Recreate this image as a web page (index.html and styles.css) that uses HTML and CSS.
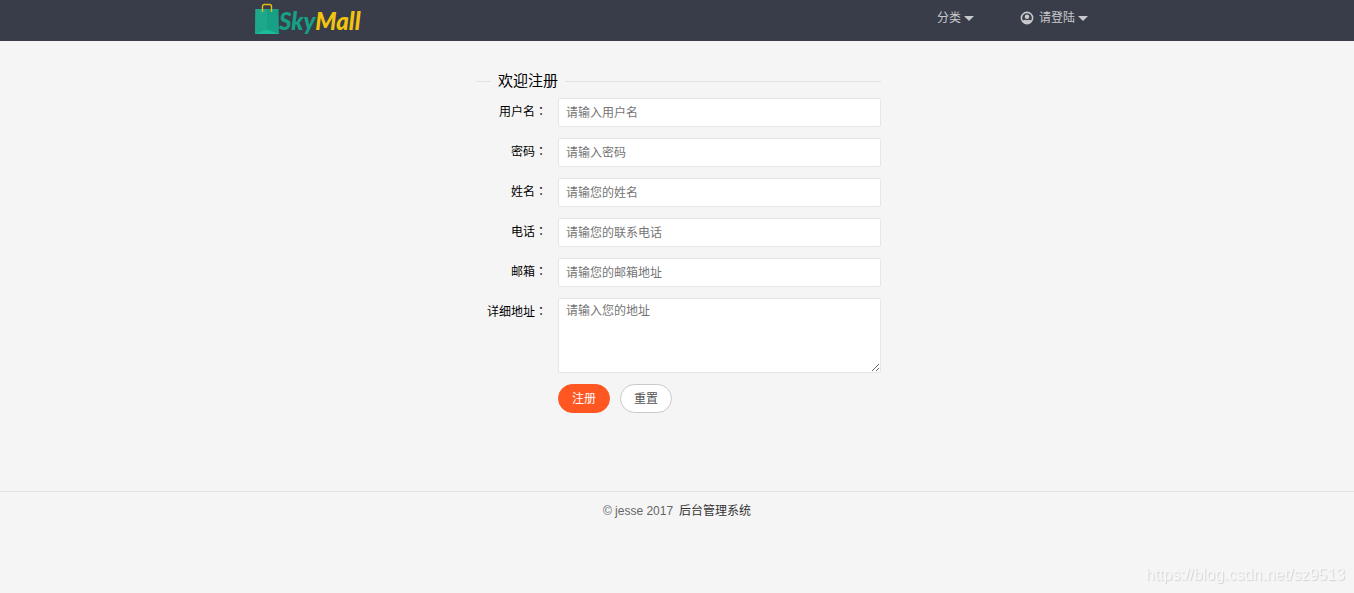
FILE: index.html
```html
<!DOCTYPE html>
<html lang="zh-CN">
<head>
<meta charset="utf-8">
<meta name="viewport" content="width=device-width, initial-scale=1">
<title>欢迎注册</title>
<link rel="stylesheet" href="styles.css">
</head>
<body>
<header class="header">
  <div class="header-inner">
    <a class="logo" href="#">
      <svg class="logo-bag" viewBox="0 0 24 32" aria-hidden="true">
        <path d="M0.500 6h23L24 31H0z" fill="#16a085"/>
        <path d="M0.500 6H12v21L0 31z" fill="#1da88b"/>
        <path d="M0 31l12-4.500L24 31z" fill="#1abc9c"/>
        <path d="M7.500 9V3.500Q7.500 1.500 9.500 1.500h5q2 0 2 2V9" fill="none" stroke="#e8bd12" stroke-width="1.400"/>
      </svg>
      <span class="logo-text"><span class="logo-sky">Sky</span><span class="logo-mall">Mall</span></span>
    </a>
    <nav class="nav">
      <a class="nav-link" href="#">分类<span class="caret"></span></a>
      <a class="nav-link" href="#">
        <svg class="user-icon" viewBox="0 0 14 14" aria-hidden="true">
          <circle cx="7" cy="7" r="5.600" fill="none" stroke="#c8c9cc" stroke-width="1.600"/>
          <circle cx="7" cy="5.700" r="2.300" fill="#c8c9cc"/>
          <path d="M2.300 9.800Q4 8.900 5.500 8.800Q7 9.600 8.500 8.800Q10 8.900 11.700 9.800Q9.600 12.800 7 12.800T2.300 9.800z" fill="#c8c9cc"/>
        </svg>请登陆<span class="caret"></span></a>
    </nav>
  </div>
</header>

<main class="main">
  <form class="form">
    <h1 class="title">欢迎注册</h1>
    <div class="row">
      <label class="label" for="username">用户名<span class="colon" lang="zh-TW">：</span></label>
      <input class="field" id="username" type="text" placeholder="请输入用户名">
    </div>
    <div class="row">
      <label class="label" for="password">密码<span class="colon" lang="zh-TW">：</span></label>
      <input class="field" id="password" type="password" placeholder="请输入密码">
    </div>
    <div class="row">
      <label class="label" for="name">姓名<span class="colon" lang="zh-TW">：</span></label>
      <input class="field" id="name" type="text" placeholder="请输您的姓名">
    </div>
    <div class="row">
      <label class="label" for="phone">电话<span class="colon" lang="zh-TW">：</span></label>
      <input class="field" id="phone" type="tel" placeholder="请输您的联系电话">
    </div>
    <div class="row">
      <label class="label" for="email">邮箱<span class="colon" lang="zh-TW">：</span></label>
      <input class="field" id="email" type="email" placeholder="请输您的邮箱地址">
    </div>
    <div class="row">
      <label class="label" for="address">详细地址<span class="colon" lang="zh-TW">：</span></label>
      <textarea class="field field-area" id="address" placeholder="请输入您的地址"></textarea>
    </div>
    <div class="actions">
      <button class="btn btn-primary" type="submit">注册</button>
      <button class="btn" type="reset">重置</button>
    </div>
  </form>
</main>

<footer class="footer">
  <span>© jesse 2017</span>
  <a class="footer-link" href="#">后台管理系统</a>
</footer>
<div class="watermark">https://blog.csdn.net/sz9513</div>
</body>
</html>
```

FILE: styles.css
```css
* {
  box-sizing: border-box;
}

body {
  margin: 0;
  background: #f5f5f5;
  color: #000;
  font: 12px/20px "Liberation Sans", "Noto Sans CJK SC", sans-serif;
}

a {
  color: inherit;
  text-decoration: none;
}

.header {
  background: #393d49;
}

.header-inner {
  display: flex;
  justify-content: space-between;
  max-width: 844px;
  min-height: 41px;
  margin: 0 auto;
  padding-right: 11px;
}

.logo {
  display: flex;
  align-items: flex-start;
  padding-top: 3px;
}

.logo-bag {
  width: 24px;
  height: 32px;
}

.logo-text {
  padding-top: 4px;
  font: italic 900 24px/28px Lato, sans-serif;
}

.logo-sky {
  color: #16a085;
}

.logo-mall {
  color: #f1c40f;
}

.nav {
  display: flex;
  gap: 46px;
  padding-top: 8px;
  color: #c8c9cc;
}

.nav-link {
  display: flex;
  align-items: center;
  height: 20px;
}

.user-icon {
  width: 14px;
  height: 14px;
  margin-right: 5px;
}

.caret {
  margin-left: 3px;
  border: 5px solid transparent;
  border-top-color: #c8c9cc;
  border-bottom: 0;
}

.form {
  max-width: 408px;
  margin: 0 auto;
  padding: 30px 0 78px 3px;
}

.title {
  display: flex;
  align-items: center;
  gap: 7px;
  margin: 0 0 7px;
  font-size: 15px;
  font-weight: 400;
}

.title::before,
.title::after {
  content: "";
  width: 15px;
  border-top: 1px solid #e2e2e2;
}

.title::after {
  flex: 1;
}

.row {
  display: flex;
  margin-bottom: 11px;
}

.label {
  width: 71px;
  margin-right: 11px;
  padding-top: 3px;
  text-align: right;
}

.colon {
  font-family: "Noto Sans CJK TC", sans-serif;
}

.field {
  flex: 1;
  min-width: 0;
  height: 29px;
  padding: 0 7px;
  border: 1px solid #e6e6e6;
  border-radius: 2px;
  background: #fff;
  font: inherit;
}

.field::placeholder {
  color: #757575;
}

.field-area {
  height: 75px;
  padding: 2px 7px;
  resize: vertical;
}

.actions {
  display: flex;
  gap: 10px;
  padding-left: 82px;
}

.btn {
  height: 29px;
  padding: 0 13px;
  border: 1px solid #c9c9c9;
  border-radius: 15px;
  background: #fff;
  color: #555;
  font: inherit;
}

.btn-primary {
  border-color: #ff5722;
  background: #ff5722;
  color: #fff;
}

.footer {
  display: flex;
  justify-content: center;
  gap: 6px;
  padding: 9px 0;
  border-top: 1px solid #e2e2e2;
  color: #666;
}

.footer-link {
  color: #333;
}

.watermark {
  position: fixed;
  right: 9px;
  bottom: 8px;
  color: #f8f8f8;
  font-size: 16px;
  text-shadow: 1px 1px 1px #d2d2d2;
}
```
